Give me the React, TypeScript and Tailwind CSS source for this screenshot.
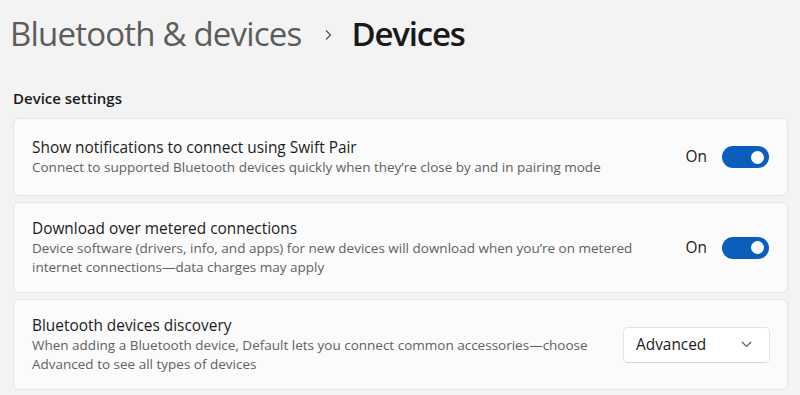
import React from "react";

const font = { fontFamily: '"Open Sans", "Noto Sans", sans-serif' };

function Toggle() {
  return (
    <div className="flex items-center">
      <span className="text-[15.4px] leading-[20px] text-[#1b1b1b] mr-[15px]">On</span>
      <div className="w-[47px] h-[22px] rounded-full bg-[#0a5fbd] flex items-center justify-end pr-[5px]">
        <div className="w-[13px] h-[13px] rounded-full bg-white" />
      </div>
    </div>
  );
}

function Card({
  title,
  lines,
  height,
  right,
}: {
  title: string;
  lines: string[];
  height: string;
  right: React.ReactNode;
}) {
  return (
    <div
      className={`${height} rounded-[6px] border border-[#e6e6e6] bg-[#fbfbfb] flex items-center justify-between pl-[18px] pr-[18px]`}
    >
      <div className="flex flex-col">
        <div className="text-[15.4px] leading-[20px] text-[#1b1b1b]">{title}</div>
        {lines.map((l) => (
          <div key={l} className="text-[13.5px] leading-[19px] text-[#616161]">
            {l}
          </div>
        ))}
      </div>
      {right}
    </div>
  );
}

export default function App() {
  return (
    <div style={font} className="w-[800px] h-[395px] bg-[#f3f3f3] overflow-hidden pl-[13px] pr-[12px]">
      <div className="pt-[11px] flex items-center h-[56px] -ml-[3px]">
        <span className="text-[33px] leading-[45px] tracking-[-0.8px] text-[#5c5c5c] whitespace-nowrap">
          Bluetooth &amp; devices
        </span>
        <svg width="8" height="12" viewBox="0 0 8 12" className="ml-[23px] mr-[19px] mt-[2px]">
          <path d="M2 1.5 L6.5 6 L2 10.5" fill="none" stroke="#5c5c5c" strokeWidth="1.4" />
        </svg>
        <span className="text-[33px] leading-[45px] tracking-[-1.2px] text-[#1a1a1a] font-semibold whitespace-nowrap">
          Devices
        </span>
      </div>
      <div className="mt-[32px] text-[15px] leading-[20px] font-semibold text-[#1b1b1b]">Device settings</div>
      <div className="mt-[10px] flex flex-col gap-[6px]">
        <Card
          height="h-[78px]"
          title="Show notifications to connect using Swift Pair"
          lines={["Connect to supported Bluetooth devices quickly when they\u2019re close by and in pairing mode"]}
          right={<Toggle />}
        />
        <Card
          height="h-[91px]"
          title="Download over metered connections"
          lines={[
            "Device software (drivers, info, and apps) for new devices will download when you\u2019re on metered",
            "internet connections\u2014data charges may apply",
          ]}
          right={<Toggle />}
        />
        <Card
          height="h-[91px]"
          title="Bluetooth devices discovery"
          lines={[
            "When adding a Bluetooth device, Default lets you connect common accessories\u2014choose",
            "Advanced to see all types of devices",
          ]}
          right={
            <div className="w-[147px] h-[36px] rounded-[5px] border border-[#e5e5e5] border-b-[#d6d6d6] bg-white flex items-center justify-between pl-[12px] pr-[17px] -mr-[1px]">
              <span className="text-[15.4px] leading-[20px] text-[#1b1b1b]">Advanced</span>
              <svg width="11" height="7" viewBox="0 0 11 7">
                <path d="M1 1 L5.5 5.5 L10 1" fill="none" stroke="#5c5c5c" strokeWidth="1.2" />
              </svg>
            </div>
          }
        />
      </div>
    </div>
  );
}
